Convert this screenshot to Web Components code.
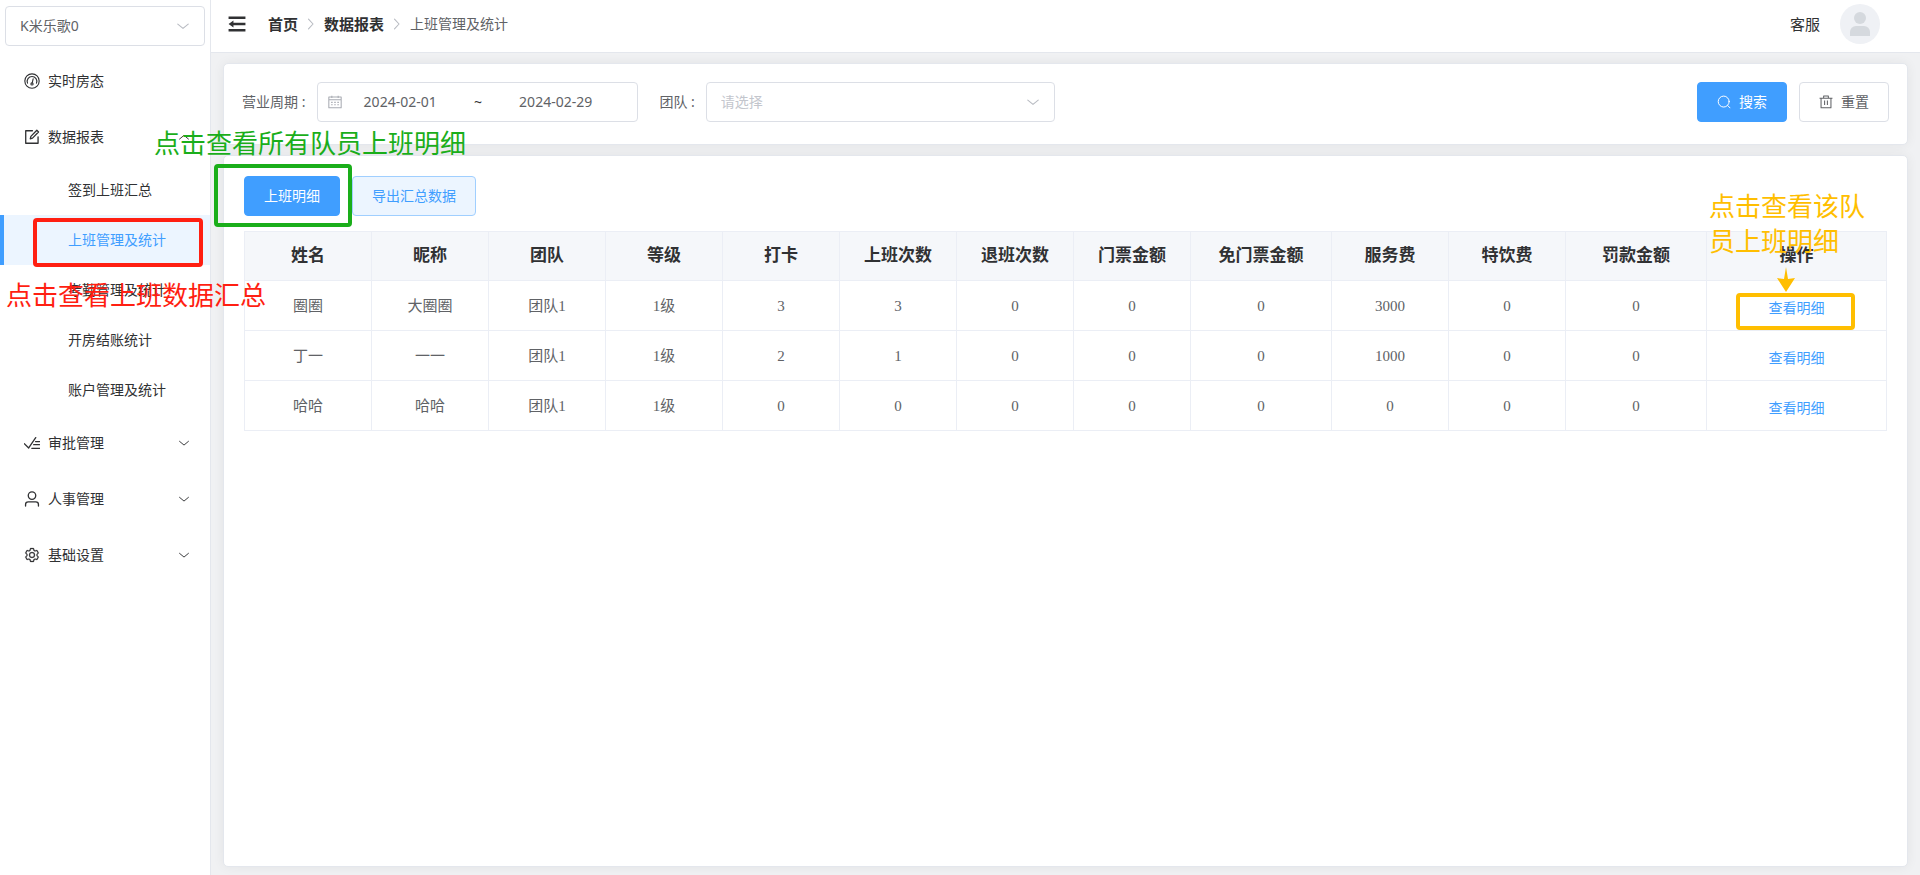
<!DOCTYPE html>
<html lang="zh-CN">
<head>
<meta charset="utf-8">
<meta name="viewport" content="width=device-width, initial-scale=1">
<title>上班管理及统计</title>
<style>
html, body { height: 100%; margin: 0; }
body {
  --primary: #409eff;
  --ink: #303133;
  --text: #606266;
  --line: #dcdfe6;
  --line-soft: #e4e7ed;
  --line-table: #ebeef5;
  --muted: #a8abb2;
  background: #f0f1f3;
  color: var(--text);
  font: 14px/20px "Noto Sans", "Noto Sans CJK SC", sans-serif;
}
</style>
</head>
<body>
<app-shell>
  <side-nav slot="aside"></side-nav>
  <top-bar slot="header"></top-bar>
  <filter-panel></filter-panel>
  <report-panel></report-panel>
</app-shell>

<script>
const define = (name, html, setup) => customElements.define(name, class extends HTMLElement {
  constructor() {
    super();
    const tpl = document.createElement('template');
    tpl.innerHTML = '<style>:host,*{box-sizing:border-box}</style>' + html;
    this.attachShadow({ mode: 'open' }).append(tpl.content.cloneNode(true));
  }
  connectedCallback() { if (setup) setup(this, this.shadowRoot); }
});

/* Icons on a 1024 grid, filled or stroked with the current colour */
const stroke = (width, cap = 'round') => `fill="none" stroke="currentColor" stroke-width="${width}" stroke-linecap="${cap}" stroke-linejoin="round"`;
const ICONS = {
  gauge: `<g ${stroke(72)}><circle cx="512" cy="512" r="460"/><path d="M225 650a310 310 0 1 1 574 0"/><path d="M585 370 530 610"/><circle cx="512" cy="700" r="70"/></g>`,
  edit: `<g ${stroke(84)}><path d="M540 110H110v800h790V500"/><path d="M400 630l40-160L820 80l110 110-385 395z"/></g>`,
  check: `<g ${stroke(84)}><path d="M20 560 300 830 750 170"/><path d="M740 420h250M620 620h370M500 850h490"/></g>`,
  user: `<g ${stroke(84)}><circle cx="512" cy="290" r="240"/><path d="M100 960V870a170 170 0 0 1 170-170h484a170 170 0 0 1 170 170v90"/></g>`,
  setting: `<path fill="currentColor" stroke="currentColor" stroke-width="16" d="M600.704 64a32 32 0 0 1 30.464 22.208l35.2 109.376c14.784 7.232 28.928 15.36 42.432 24.512l112.384-24.192a32 32 0 0 1 34.432 15.36L944.32 364.8a32 32 0 0 1-4.032 37.504l-77.12 85.12a357.12 357.12 0 0 1 0 49.024l77.12 85.248a32 32 0 0 1 4.032 37.504l-88.704 153.6a32 32 0 0 1-34.432 15.296L708.8 803.904c-13.44 9.088-27.648 17.28-42.368 24.512l-35.264 109.376A32 32 0 0 1 600.704 960H423.296a32 32 0 0 1-30.464-22.208L357.696 828.48a351.616 351.616 0 0 1-42.56-24.64l-112.32 24.256a32 32 0 0 1-34.432-15.36L79.68 659.2a32 32 0 0 1 4.032-37.504l77.12-85.248a357.12 357.12 0 0 1 0-48.896l-77.12-85.248A32 32 0 0 1 79.68 364.8l88.704-153.6a32 32 0 0 1 34.432-15.296l112.32 24.256c13.568-9.152 27.776-17.408 42.56-24.64l35.2-109.312A32 32 0 0 1 423.232 64H600.64zm-23.424 64H446.72l-36.352 113.088-24.512 11.968a294.113 294.113 0 0 0-34.816 20.096l-22.656 15.36-116.224-25.088-65.28 113.152 79.68 88.192-1.92 27.136a293.12 293.12 0 0 0 0 40.192l1.92 27.136-79.808 88.192 65.344 113.152 116.224-25.024 22.656 15.296a294.113 294.113 0 0 0 34.816 20.096l24.512 11.968L446.72 896h130.688l36.48-113.152 24.448-11.904a288.282 288.282 0 0 0 34.752-20.096l22.592-15.296 116.288 25.024 65.28-113.152-79.744-88.192 1.92-27.136a293.12 293.12 0 0 0 0-40.256l-1.92-27.136 79.808-88.128-65.344-113.152-116.288 24.96-22.592-15.232a287.616 287.616 0 0 0-34.752-20.096l-24.448-11.904L577.344 128zM512 320a192 192 0 1 1 0 384 192 192 0 0 1 0-384zm0 64a128 128 0 1 0 0 256 128 128 0 0 0 0-256z"/>`,
  down: `<path ${stroke(80)} d="M130 370l382 320 382-320"/>`,
  up: `<path ${stroke(80)} d="M130 690l382-320 382 320"/>`,
  right: `<path ${stroke(80)} d="M330 150l330 362-330 362"/>`,
  fold: `<g ${stroke(136, 'butt')}><path d="M80 190h864M300 512h644M80 834h864"/></g><path fill="currentColor" d="M80 512l250-180v360z"/>`,
  calendar: `<g ${stroke(76, 'butt')}><path d="M60 150h904v780H60zM60 350h904M280 60v160M744 60v160"/><path d="M230 540h564M230 720h564" stroke-dasharray="110 117"/></g>`,
  search: `<g ${stroke(72)}><circle cx="490" cy="480" r="400"/><path d="M780 770l170 170"/></g>`,
  trash: `<g ${stroke(76, 'butt')}><path d="M40 230h944M340 230V80h344v150M150 230v710h724V230M410 400v340M614 400v340"/></g>`
};
define('ui-icon', `<style>:host{display:block;flex:none;width:14px;height:14px}svg{display:block;width:100%;height:100%}</style><svg viewBox="0 0 1024 1024" aria-hidden="true"></svg>`,
  (host, root) => { root.querySelector('svg').innerHTML = ICONS[host.getAttribute('name')]; });

/* Page frame: side column, top bar, stacked panels */
define('app-shell', `<style>
:host{display:flex;min-height:100%}
aside{flex:none;width:211px;background:#fff;border-right:1px solid var(--line-soft)}
.body{flex:1;min-width:0;display:flex;flex-direction:column}
main{flex:1;display:flex;flex-direction:column;gap:10px;padding:10px 12px 8px}
</style>
<aside><slot name="aside"></slot></aside>
<div class="body"><slot name="header"></slot><main><slot></slot></main></div>`);

/* Frame and caption that point out a control; laid over its positioned parent */
define('guide-note', `<style>
:host{position:absolute;z-index:5;pointer-events:none;color:var(--note);font-size:26px;line-height:35px}
:host([kind=frame]){border:4px solid var(--note);border-radius:4px}
:host([kind=text]){white-space:nowrap}
</style><slot></slot>`);

define('select-box', `<style>
:host{display:block;position:relative}
select{display:block;width:100%;height:40px;padding:0 40px 0 14px;border:1px solid var(--line);border-radius:4px;background:#fff;color:var(--text);font:inherit;appearance:none}
:host([empty]) select{color:#c3c6cd}
ui-icon{position:absolute;right:15px;top:13px;color:#b8bbc2;pointer-events:none}
</style><select><option></option></select><ui-icon name="down"></ui-icon>`,
  (host, root) => {
    root.querySelector('option').textContent = host.getAttribute('value');
    root.querySelector('select').setAttribute('aria-label', host.getAttribute('label'));
  });

define('ui-button', `<style>
:host{display:block;flex:none}
button{display:flex;align-items:center;justify-content:center;gap:8px;width:100%;height:40px;padding:0 19px;border:1px solid var(--line);border-radius:4px;background:#fff;color:var(--text);font:inherit;white-space:nowrap}
:host([kind=primary]) button{background:var(--primary);border-color:var(--primary);color:#fff}
:host([kind=plain]) button{background:#ecf5ff;border-color:#a0cfff;color:var(--primary)}
</style><button type="button"><slot name="icon"></slot><slot></slot></button>`);

define('nav-item', `<style>
:host{display:block;color:var(--ink)}
a{display:flex;align-items:center;gap:8px;height:56px;padding:0 20px 0 24px;color:inherit;text-decoration:none}
ui-icon{width:16px;height:16px}
.arrow{width:12px;height:12px;margin-left:auto}
:host([sub]) a{height:50px;padding-left:68px}
:host([active]) a{background:#ecf5ff;color:var(--primary);border-left:4px solid var(--primary);padding-left:64px}
</style><a href="#"><slot></slot></a>`,
  (host, root) => {
    const a = root.querySelector('a');
    const icon = (name, cls) => { const e = document.createElement('ui-icon'); e.setAttribute('name', name); e.className = cls; return e; };
    if (host.getAttribute('icon')) a.prepend(icon(host.getAttribute('icon'), ''));
    if (host.getAttribute('arrow')) a.append(icon(host.getAttribute('arrow'), 'arrow'));
  });

define('side-nav', `<style>
:host{display:block;--note:#ff1f12}
select-box{margin:0 5px}
.store{padding:6px 0 7px}
.spot{position:relative}
.frame{left:33px;right:7px;top:3px;bottom:-2px}
.caption{left:6px;top:63px}
</style>
<div class="store"><select-box label="门店" value="K米乐歌0"></select-box></div>
<nav>
<nav-item icon="gauge">实时房态</nav-item>
<nav-item icon="edit" arrow="up">数据报表</nav-item>
<nav-item sub>签到上班汇总</nav-item>
<div class="spot"><nav-item sub active>上班管理及统计</nav-item>
<guide-note kind="frame" class="frame"></guide-note><guide-note kind="text" class="caption">点击查看上班数据汇总</guide-note></div>
<nav-item sub>考勤管理及统计</nav-item>
<nav-item sub>开房结账统计</nav-item>
<nav-item sub>账户管理及统计</nav-item>
<nav-item icon="check" arrow="down">审批管理</nav-item>
<nav-item icon="user" arrow="down">人事管理</nav-item>
<nav-item icon="setting" arrow="down">基础设置</nav-item>
</nav>`);

define('top-bar', `<style>
:host{display:flex;align-items:center;height:53px;padding:0 40px 4px 16px;background:#fff;border-bottom:1px solid var(--line-soft);color:var(--ink)}
button{padding:0;border:0;background:none;color:inherit}
button ui-icon{width:20px;height:20px}
ol{display:flex;align-items:center;gap:6px;margin:0 0 0 21px;padding:0;list-style:none}
li{display:flex;align-items:center;gap:6px;color:var(--text)}
li a{color:var(--ink);font-size:15px;font-weight:700;text-decoration:none}
li ui-icon{color:#b8bbc2}
.user{display:flex;align-items:center;gap:20px;margin-left:auto;font-size:15px}
.user svg{display:block;width:40px;height:40px}
</style>
<button type="button" aria-label="收起菜单"><ui-icon name="fold"></ui-icon></button>
<ol><li><a href="#">首页</a><ui-icon name="right"></ui-icon></li><li><a href="#">数据报表</a><ui-icon name="right"></ui-icon></li><li>上班管理及统计</li></ol>
<div class="user"><span>客服</span><svg viewBox="0 0 40 40" aria-hidden="true"><circle cx="20" cy="20" r="20" fill="#eff1f5"/><circle cx="20" cy="14" r="6" fill="#d5d9de"/><path d="M10 32v-4a6 6 0 0 1 6-6h8a6 6 0 0 1 6 6v4z" fill="#d5d9de"/></svg></div>`);

const PANEL = 'display:block;background:#fff;border:1px solid var(--line-soft);border-radius:5px;box-shadow:0 0 12px rgba(0,0,0,.06);';

define('filter-panel', `<style>
:host{${PANEL}padding:18px 18px 22px}
form{display:flex;align-items:center}
.label{flex:none}
.range{display:flex;align-items:center;width:321px;height:40px;margin:0 21px 0 12px;padding:0 24px 0 10px;border:1px solid var(--line);border-radius:4px}
.range ui-icon{color:var(--muted)}
.range input{flex:1;min-width:0;padding:0;border:0;outline:0;background:none;color:var(--text);font:inherit;text-align:center}
.range span{flex:none;width:40px;text-align:center;color:var(--ink)}
select-box{width:349px;margin-left:11px}
.actions{display:flex;gap:12px;margin-left:auto}
</style>
<form>
<span class="label">营业周期 :</span>
<div class="range"><ui-icon name="calendar"></ui-icon><input aria-label="开始日期" value="2024-02-01"><span>~</span><input aria-label="结束日期" value="2024-02-29"></div>
<span class="label">团队 :</span>
<select-box empty label="团队" value="请选择"></select-box>
<div class="actions"><ui-button kind="primary"><ui-icon slot="icon" name="search"></ui-icon>搜索</ui-button><ui-button><ui-icon slot="icon" name="trash"></ui-icon>重置</ui-button></div>
</form>`);

define('report-panel', `<style>
:host{${PANEL}flex:1;padding:20px}
.bar{display:flex;gap:12px;margin-bottom:15px}
.spot{position:relative;--note:#1aae1a}
.frame{left:-30px;right:-12px;top:-12px;bottom:-11px}
.caption{left:-90px;top:-50px}
</style>
<div class="bar"><div class="spot"><ui-button kind="primary">上班明细</ui-button>
<guide-note kind="frame" class="frame"></guide-note><guide-note kind="text" class="caption">点击查看所有队员上班明细</guide-note></div>
<ui-button kind="plain">导出汇总数据</ui-button></div>
<data-grid></data-grid>`);

const COLUMNS = [['姓名',127],['昵称',117],['团队',117],['等级',117],['打卡',117],['上班次数',117],['退班次数',117],['门票金额',117],['免门票金额',141],['服务费',117],['特饮费',117],['罚款金额',141],['操作',180]];
const ROWS = [
  ['圈圈','大圈圈','团队1','1级',3,3,0,0,0,3000,0,0],
  ['丁一','一一','团队1','1级',2,1,0,0,0,1000,0,0],
  ['哈哈','哈哈','团队1','1级',0,0,0,0,0,0,0,0]
];
define('data-grid', `<style>
:host{display:block}
table{width:100%;table-layout:fixed;border-collapse:collapse;text-align:center;font:15px/20px "Liberation Serif","Noto Sans CJK SC",serif}
th,td{height:50px;padding:0;border:1px solid var(--line-table);white-space:nowrap}
th{background:#f5f7fa;color:var(--ink);font-size:17px;font-weight:700}
thead tr,th{height:49px}
td.op{position:relative;--note:#ffbe00;font:14px/20px "Noto Sans","Noto Sans CJK SC",sans-serif}
td a{display:block;padding-top:4px;color:var(--primary);text-decoration:none}
.frame{left:29px;right:31px;top:12px;bottom:0}
.arrow{left:70px;top:-14px;width:18px;height:25px}
.caption{left:2px;top:-92px;text-align:left}
.arrow svg{display:block}
</style><table><colgroup></colgroup><thead><tr></tr></thead><tbody></tbody></table>`,
  (host, root) => {
    const $ = s => root.querySelector(s);
    $('colgroup').innerHTML = COLUMNS.map(c => `<col style="width:${c[1]}px">`).join('');
    $('thead tr').innerHTML = COLUMNS.map(c => `<th scope="col">${c[0]}</th>`).join('');
    const note = `<guide-note kind="frame" class="frame"></guide-note><guide-note class="arrow"><svg viewBox="0 0 18 25" width="18" height="25" aria-hidden="true"><path d="M9 0 11 12 18 11 9 25 0 11 7 12z" fill="#ffbe00"/></svg></guide-note><guide-note kind="text" class="caption">点击查看该队<br>员上班明细</guide-note>`;
    $('tbody').innerHTML = ROWS.map((r, i) => `<tr>${r.map(v => `<td>${v}</td>`).join('')}<td class="op"><a href="#">查看明细</a>${i ? '' : note}</td></tr>`).join('');
  });
</script>
</body>
</html>
